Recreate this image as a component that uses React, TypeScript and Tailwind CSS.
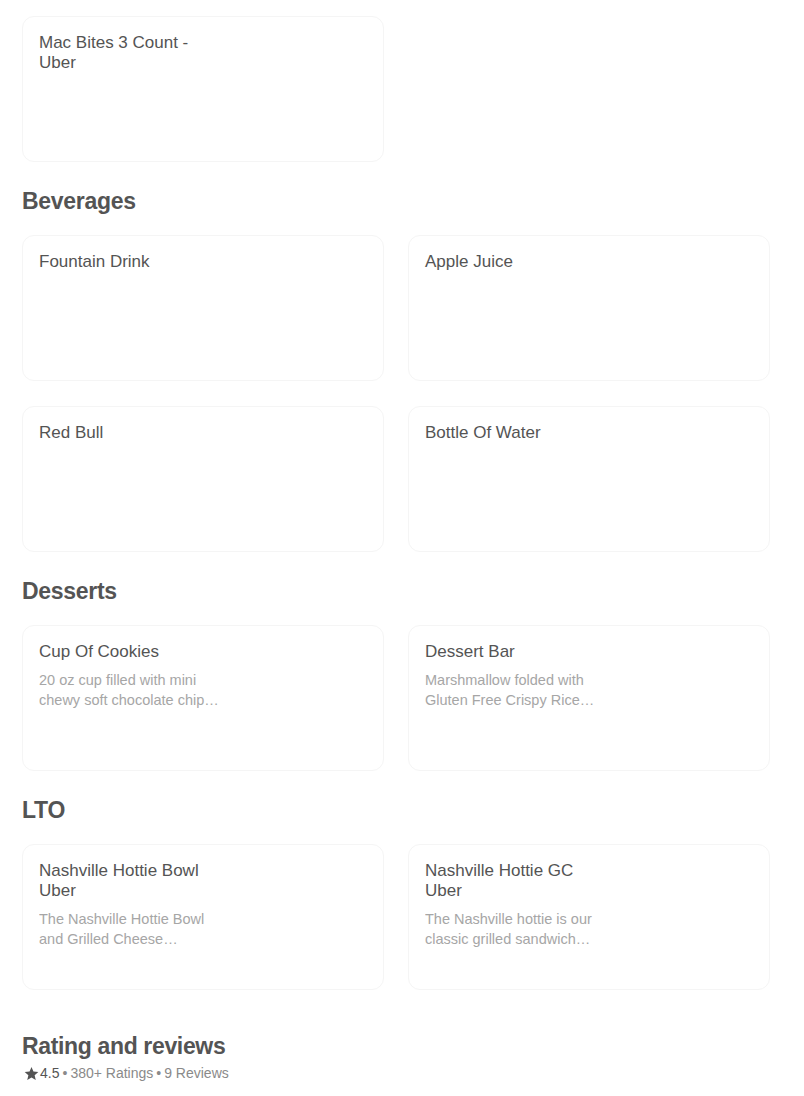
import React from "react";

type Item = { title: string; desc?: string };

const Card = ({ item }: { item: Item }) => (
  <div className="h-[146px] rounded-[12px] border border-[#f5f5f5] bg-white px-4 py-[16px]">
    <div className="w-[178px]">
      <div className="text-[17px] leading-[20px] text-[#545454]">{item.title}</div>
      {item.desc && (
        <div className="mt-[8px] text-[14.5px] leading-[20px] text-[#a6a6a6] line-clamp-2 w-[180px]">
          {item.desc}
        </div>
      )}
    </div>
  </div>
);

const Section = ({ title, items }: { title: string; items: Item[] }) => (
  <div className="mt-[25px]">
    <h2 className="text-[23px] leading-[28px] font-bold text-[#545454] tracking-[-0.3px]">{title}</h2>
    <div className="mt-[20px] grid grid-cols-2 gap-x-[24px] gap-y-[25px]">
      {items.map((it) => (
        <Card key={it.title} item={it} />
      ))}
    </div>
  </div>
);

export default function App() {
  return (
    <div
      className="min-h-[1096px] bg-white pl-[22px] pr-[34px] pt-4"
      style={{ fontFamily: '"Liberation Sans", Arial, sans-serif' }}
    >
      <div className="grid grid-cols-2 gap-x-[24px]">
        <Card item={{ title: "Mac Bites 3 Count - Uber" }} />
      </div>
      <Section
        title="Beverages"
        items={[
          { title: "Fountain Drink" },
          { title: "Apple Juice" },
          { title: "Red Bull" },
          { title: "Bottle Of Water" },
        ]}
      />
      <Section
        title="Desserts"
        items={[
          { title: "Cup Of Cookies", desc: "20 oz cup filled with mini chewy soft chocolate chip cookies" },
          { title: "Dessert Bar", desc: "Marshmallow folded with Gluten Free Crispy Rice cereal" },
        ]}
      />
      <Section
        title="LTO"
        items={[
          { title: "Nashville Hottie Bowl Uber", desc: "The Nashville Hottie Bowl and Grilled Cheese Sandwiches with our signature sauce" },
          { title: "Nashville Hottie GC Uber", desc: "The Nashville hottie is our classic grilled sandwich with hot chicken" },
        ]}
      />
      <div className="mt-[41px]">
        <h2 className="text-[23px] leading-[30px] font-bold text-[#545454] tracking-[-0.35px]">Rating and reviews</h2>
        <div className="mt-[2px] flex items-center text-[14px] leading-[20px] text-[#8a8a8a]">
          <svg width="15" height="15" viewBox="0 0 24 24" className="ml-[2px] mr-[1px]" fill="#545454">
            <path d="M12 1.5l3.1 7.2 7.8.7-5.9 5.2 1.8 7.7L12 18.2l-6.8 4.1 1.8-7.7L1.1 9.4l7.8-.7z" />
          </svg>
          <span className="text-[#545454]">4.5</span>
          <span className="mx-[3px]">•</span>
          <span>380+ Ratings</span>
          <span className="mx-[3px]">•</span>
          <span>9 Reviews</span>
        </div>
      </div>
    </div>
  );
}
